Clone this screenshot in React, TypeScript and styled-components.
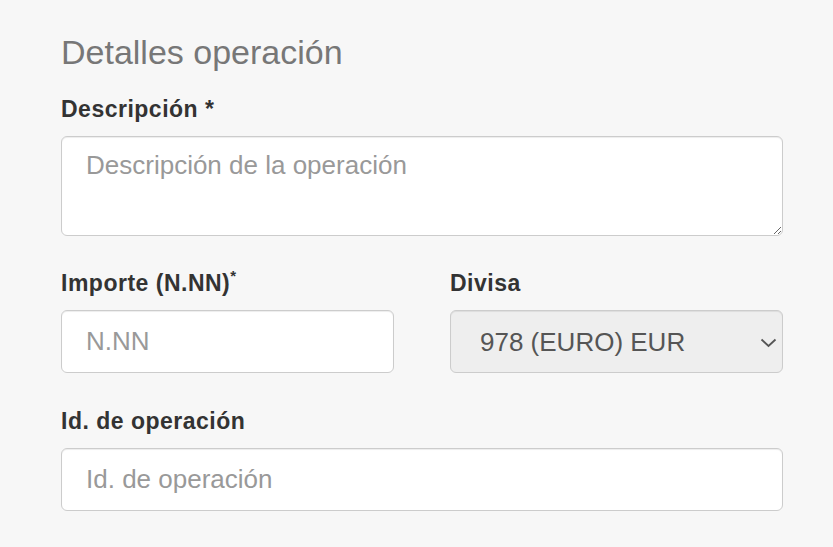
import React from "react";
import styled, { createGlobalStyle } from "styled-components";

const Global = createGlobalStyle`
  html, body { margin: 0; padding: 0; background: #f7f7f7; }
  body { font-family: "Liberation Sans", Arial, sans-serif; }
  * { box-sizing: border-box; }
`;

const Page = styled.div`
  padding: 34px 50px 0 61px;
  width: 833px;
  min-height: 547px;
  background: #f7f7f7;
`;

const Form = styled.div`
  width: 722px;
  display: flex;
  flex-direction: column;
`;

const Title = styled.h3`
  margin: 0 0 23px;
  font-size: 34px;
  line-height: 1.1;
  font-weight: 400;
  color: #777;
`;

const Group = styled.div<{ $mb?: number }>`
  display: flex;
  flex-direction: column;
  margin-bottom: ${(p) => p.$mb ?? 30}px;
`;

const Row = styled.div`
  display: grid;
  grid-template-columns: 1fr 1fr;
  column-gap: 56px;
`;

const Label = styled.label`
  display: block;
  font-size: 23px;
  line-height: 30px;
  letter-spacing: 0.5px;
  font-weight: 700;
  color: #333;
  margin-bottom: 12px;
`;

const Sup = styled.sup`
  font-size: 15px;
  line-height: 0;
  position: relative;
  top: -2px;
  letter-spacing: 0;
`;

const fieldBase = `
  width: 100%;
  font-family: "Liberation Sans", Arial, sans-serif;
  font-size: 26px;
  color: #555;
  background: #fff;
  border: 1px solid #ccc;
  border-radius: 6px;
  box-shadow: inset 0 1px 1px rgba(0,0,0,0.075);
  outline: none;
  &::placeholder { color: #999; opacity: 1; }
`;

const TextArea = styled.textarea`
  ${fieldBase}
  height: 100px;
  padding: 10px 24px;
  line-height: 1.42857;
  resize: vertical;
  display: block;
`;

const Input = styled.input`
  ${fieldBase}
  height: 63px;
  padding: 0 24px;
  line-height: 1.42857;
  display: block;
`;

const SelectWrap = styled.div`
  position: relative;
  height: 63px;
`;

const Select = styled.select`
  ${fieldBase}
  height: 63px;
  padding: 0 40px 0 29px;
  background: #eee;
  appearance: none;
  -webkit-appearance: none;
  color: #555;
  opacity: 1;
  display: block;
`;

const Chevron = styled.svg`
  position: absolute;
  right: 6px;
  top: 28px;
  width: 17px;
  height: 10px;
  pointer-events: none;
`;

export default function App() {
  return (
    <>
      <Global />
      <Page>
        <Form>
          <Title>Detalles operación</Title>
          <Group $mb={32}>
            <Label>Descripción *</Label>
            <TextArea placeholder="Descripción de la operación" />
          </Group>
          <Row>
            <Group $mb={33}>
              <Label>
                Importe (N.NN)<Sup>*</Sup>
              </Label>
              <Input placeholder="N.NN" />
            </Group>
            <Group $mb={33}>
              <Label>Divisa</Label>
              <SelectWrap>
                <Select disabled defaultValue="978">
                  <option value="978">978 (EURO) EUR</option>
                </Select>
                <Chevron viewBox="0 0 17 10">
                  <path d="M1.5 1.5 L8.5 8 L15.5 1.5" fill="none" stroke="#555" strokeWidth="1.8" />
                </Chevron>
              </SelectWrap>
            </Group>
          </Row>
          <Group>
            <Label>Id. de operación</Label>
            <Input placeholder="Id. de operación" />
          </Group>
        </Form>
      </Page>
    </>
  );
}
